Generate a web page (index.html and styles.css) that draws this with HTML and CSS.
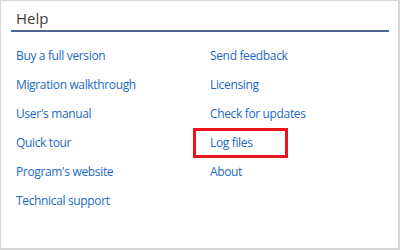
FILE: index.html
```html
<!DOCTYPE html>
<html lang="en">
<head>
<meta charset="utf-8">
<title>Help</title>
<link rel="stylesheet" href="styles.css">
</head>
<body>
<div class="panel">
  <div class="title">Help</div>
  <div class="rule"></div>
  <div class="links">
    <div class="col">
      <a class="link">Buy a full version</a>
      <a class="link">Migration walkthrough</a>
      <a class="link">User's manual</a>
      <a class="link">Quick tour</a>
      <a class="link">Program's website</a>
      <a class="link">Technical support</a>
    </div>
    <div class="col">
      <a class="link">Send feedback</a>
      <a class="link">Licensing</a>
      <a class="link">Check for updates</a>
      <a class="link highlight">Log files</a>
      <a class="link">About</a>
    </div>
  </div>
</div>
</body>
</html>
```
FILE: styles.css
```css
html, body {
  margin: 0;
  padding: 0;
  background: #ffffff;
}
.panel {
  box-sizing: border-box;
  width: 400px;
  height: 250px;
  border-style: solid;
  border-color: #d6d6d6;
  border-width: 1px 2px 2px 1px;
  font-family: "Open Sans", "Noto Sans", sans-serif;
}
.title {
  padding: 7px 0 0 15px;
  font-size: 15px;
  line-height: 20px;
  color: #3c3c3c;
}
.rule {
  height: 2px;
  margin: 2px 9px 0 10px;
  background: #4b6891;
}
.links {
  display: grid;
  grid-template-columns: 194px auto;
  padding: 9px 0 0 15px;
}
.col {
  display: flex;
  flex-direction: column;
}
.link {
  display: block;
  font-size: 12px;
  letter-spacing: -0.35px;
  line-height: 29px;
  color: #1b6ac3;
  text-decoration: none;
}
.highlight {
  position: relative;
}
.highlight::before {
  content: "";
  position: absolute;
  left: -17px;
  top: 0;
  width: 95px;
  height: 30px;
  box-sizing: border-box;
  border: 3px solid #e8141c;
}
```
